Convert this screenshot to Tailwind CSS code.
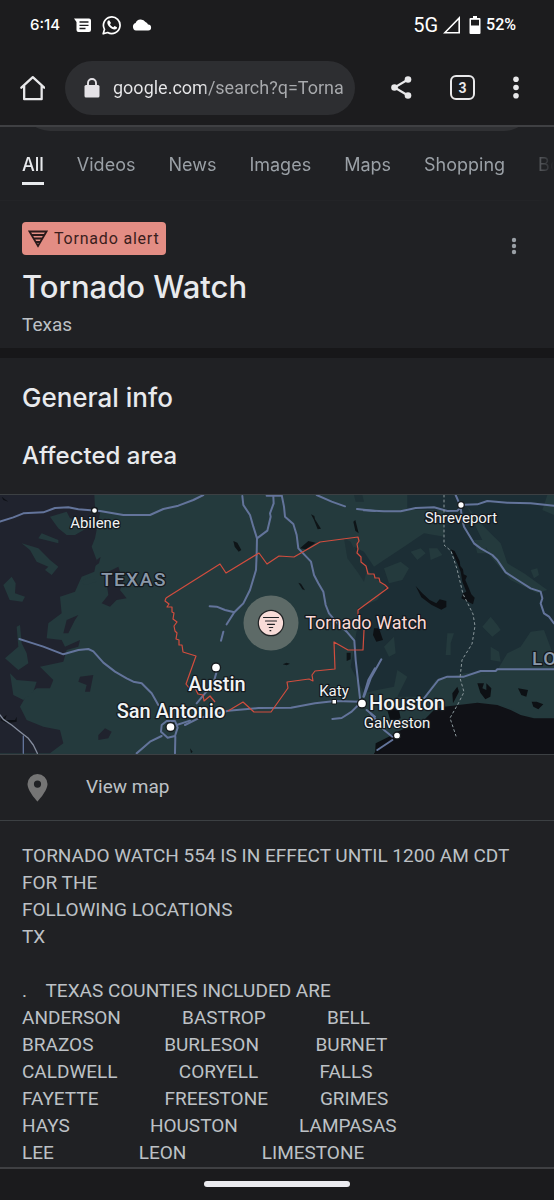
<!DOCTYPE html>
<html lang="en">
<head>
<meta charset="utf-8">
<meta name="viewport" content="width=device-width, initial-scale=1">
<title>Tornado Watch</title>
<script src="https://cdn.jsdelivr.net/npm/@tailwindcss/browser@4"></script>
</head>
<body class="min-h-screen flex flex-col bg-[#202124] text-[#bdc1c6] font-['Roboto',sans-serif] overflow-x-hidden">

<header class="bg-[#1c1c1e] border-b-2 border-[#3f4043]">
  <!-- Status bar -->
  <div class="flex items-center justify-between h-[50px] pl-[30px] pr-[38px] text-white font-medium">
    <div class="flex items-center">
      <span class="w-[44px] font-['Inter',sans-serif] text-[15px]">6:14</span>
      <svg class="w-[17px] h-[15px]" viewBox="0 0 17 15" fill="#fff"><path d="M0 .5h15a2 2 0 0 1 2 2V12a2 2 0 0 1-2 2H4.500a2 2 0 0 1-2-2V4z"/><path d="M5.500 4h9M5.500 7.300h9M5.500 10.500h6" stroke="#1c1c1e" stroke-width="1.300"/></svg>
      <svg class="ml-[11px] w-5 h-5" viewBox="0 0 20 20"><path d="M1.200 18.800l1.300-4.500a8.300 8.300 0 1 1 3.200 3.200z" fill="none" stroke="#fff" stroke-width="1.700" stroke-linejoin="round"/><path d="M7.200 5.200c-.5-.3-1.800.6-1.900 2-.2 3 4 7.300 7.200 7.300 1.500 0 2.600-1 2.500-2.300l-2.400-1.300-1.300 1.300c-1.500-.5-2.700-1.800-3.300-3l1-1.300z" fill="#fff"/></svg>
      <svg class="ml-[10px] w-[20px] h-[12px]" viewBox="0 0 20 12" fill="#fff"><path d="M4 11.500A3.900 3.900 0 0 1 3.600 4 5.600 5.600 0 0 1 13.500 3 4 4 0 0 1 16 5.500a3 3 0 0 1 .2 6z"/></svg>
    </div>
    <div class="flex items-center">
      <span class="text-[20px] font-normal">5G</span>
      <svg class="ml-[5px] w-[18px] h-[18px]" viewBox="0 0 18 18"><path d="M16.200 2v14.800H1.800z" fill="none" stroke="#fff" stroke-width="1.600"/></svg>
      <svg class="ml-[8px] w-[12px] h-[18px]" viewBox="0 0 12 18"><path d="M4 0h4v2h2.500a1 1 0 0 1 1 1v14a1 1 0 0 1-1 1h-9a1 1 0 0 1-1-1V3a1 1 0 0 1 1-1H4z" fill="#fff"/><path d="M2 3.800h8v5.700H2z" fill="#1c1c1e"/></svg>
      <span class="ml-[5px] text-[16px]">52%</span>
    </div>
  </div>
  <!-- Browser toolbar -->
  <div class="flex items-center h-[75px] pl-[20px] pr-[35px]">
    <button aria-label="Home" class="shrink-0 w-[25px] h-[26px]"><svg viewBox="0 0 24 25" fill="none" stroke="#e8e8ea" stroke-width="2.200" stroke-linejoin="round" stroke-linecap="round"><path d="M1.300 12.200L12.300 2l11 10.200M4 10.500v12.700h16.800V10.500"/></svg></button>
    <div class="ml-5 min-w-0 flex-1 flex items-center h-[54px] rounded-full bg-[#2d2e31] pl-[19px] pr-[11px]">
      <svg class="w-4 h-5 shrink-0" viewBox="0 0 16 20"><rect x=".5" y="7" width="15" height="12.500" rx="1.500" fill="#e4e2e6"/><path d="M4 8V5a4 4 0 0 1 8 0v3" fill="none" stroke="#e4e2e6" stroke-width="1.900"/></svg>
      <input aria-label="Address" type="text" value="google.com/search?q=Tornado" class="ml-[13px] min-w-0 flex-1 outline-none text-lg leading-[26px] text-transparent bg-clip-text bg-[linear-gradient(to_right,#e8e8ea_92px,#a9abae_93px)]">
    </div>
    <button aria-label="Share" class="shrink-0 ml-[36px] w-[21px] h-[23px]"><svg viewBox="0 0 21 23" fill="#e8e8ea"><path d="M17 3.500L3.500 11.500 17 19.500" fill="none" stroke="#e8e8ea" stroke-width="2.100"/><circle cx="17" cy="3.500" r="3.300"/><circle cx="3.500" cy="11.500" r="3.300"/><circle cx="17" cy="19.500" r="3.300"/></svg></button>
    <button aria-label="Tabs" class="shrink-0 ml-[38px] w-[25px] h-[25px] rounded-[6px] border-2 border-[#e8e8ea] text-[#e8e8ea] text-sm leading-none font-bold">3</button>
    <button aria-label="Browser menu" class="shrink-0 ml-[38px] w-[6px] h-[23px]"><svg viewBox="0 0 6 23" fill="#e8e8ea"><circle cx="3" cy="3.300" r="2.800"/><circle cx="3" cy="11.500" r="2.800"/><circle cx="3" cy="19.700" r="2.800"/></svg></button>
  </div>
</header>

<main class="flex-1">
  <!-- Lower edge of the search box, scrolled under the toolbar -->
  <div class="flex items-end h-1 px-[22px] overflow-hidden"><div class="w-full h-14 shrink-0 rounded-full bg-[#303134]"></div></div>
  <nav class="flex gap-[33px] h-[70px] pl-[22px] pt-[21px] overflow-hidden whitespace-nowrap font-['Inter',sans-serif] text-lg leading-[26px] text-[#9aa0a6] border-b border-[#232427] mask-r-from-[97%]">
    <a href="#" class="h-[33px] border-b-3 border-[#e8eaed] text-[#e8eaed] font-medium">All</a>
    <a href="#">Videos</a>
    <a href="#">News</a>
    <a href="#">Images</a>
    <a href="#">Maps</a>
    <a href="#">Shopping</a>
    <a href="#" class="opacity-50">Books</a>
  </nav>

  <section class="flex justify-between h-[147px] pl-[22px] pr-[37px] pt-[21px]">
    <div>
      <div class="flex items-center w-fit h-[33px] rounded-[4px] bg-[#e38d84] text-[#3a1d1c] px-[6px] gap-[6px] text-base tracking-wider">
        <svg class="w-5 h-[18px]" viewBox="0 0 20 18" fill="none" stroke="#2b1a1b" stroke-width="1.800"><path d="M1.500 1.500h17L10 16zM3.500 5h13M5.500 8.500h9M7.500 12h5"/></svg>
        <span>Tornado alert</span>
      </div>
      <h1 class="mt-3 font-['Inter',sans-serif] font-medium text-[31px] leading-10 text-[#e8eaed]">Tornado Watch</h1>
      <p class="mt-[6px] text-[19px] leading-6">Texas</p>
    </div>
    <button aria-label="More options" class="mt-[15px] w-[6px] h-[18px]"><svg viewBox="0 0 6 18" fill="#9aa0a6"><circle cx="3" cy="3" r="2.200"/><circle cx="3" cy="9" r="2.200"/><circle cx="3" cy="15" r="2.200"/></svg></button>
  </section>

  <div class="h-[10px] bg-[#171719]"></div>

  <section>
    <div class="px-[22px] pt-[24px] pb-[22px] font-['Inter',sans-serif] font-medium text-[#e8eaed]">
      <h2 class="text-[26px] leading-8">General info</h2>
      <h3 class="mt-[26px] text-[24px] leading-8">Affected area</h3>
    </div>

    <svg class="block w-full border-y border-[#3c4043]" viewBox="0 0 554 259" role="img" aria-label="Map of the affected area">
      <rect width="554" height="259" fill="#243a3d"/>
      <!-- West: dry land -->
      <g transform="translate(0 -15) scale(.33333)" fill="#20232e">
        <path d="M0 45H283L285 80 300 100 285 175 275 200 290 240 283 275 245 290 225 335 180 350 185 400 145 430 140 475 185 480 195 500 240 480 235 500 200 510 190 545 120 560 160 600 150 625 110 625 80 645 60 680 80 720 130 740 180 750 190 790 150 820H0z"/>
        <path d="M290 240l12-10-5 20-15 10zM325 275l30-15 15 45-10 25 20 25-30 5-20 20-25-10 20-25-5-35zM200 420l35-15-10 15-20 40h-15zM240 590l40-5-10 50-15 0 5-20-25-10zM295 765l20-20 20 10-10 20-30 5z"/>
        <g fill="#243a3d"><path d="M150 110l50-15 10 20 40 10 10 20-35 20-25 0-25-20zM115 175l10-15 50 20v10zM65 190l50 15 35 35 25 20-20 25-20-15 10-10-35-15-20-35zM10 315l25-25 12 20-2 30 30 10-8 15-38-5zM50 440l10-5 5 55 15 30 5 30-30 20-40-35 40-35zM30 580l20 20 60 5-10 30-30 25-30-15zM240 305l30-15 20 15-35 10z"/></g>
        <path d="M0 720l20-15-5 15 30 0 5-10v15l-30 5zM5 50l20 15-15-5z" fill="#0e1116"/>
      </g>
      <!-- East: forest and gulf -->
      <g transform="translate(364 -15) scale(.33333)">
        <path d="M130 45H570V530L540 450 500 455 470 500 430 520 400 570 300 580 215 600 180 650 100 650 130 590 100 570 90 620 40 630 0 640-40 560-30 500-20 440-20 385 40 360 65 320 30 290-10 250-30 200 0 215 30 260 60 240 120 200 150 180 180 160 240 170 240 90 130 90z" fill="#1c2e35"/>
        <path d="M60 265l50-20 25 20-20 35-40 10zM310 80l50 60 50 50 20 60 50 30 70 50-30 10-80-40-60-70-40-80zM330 180l30 0 10 40-30 0zM250 460l20 0-10 30 0 35-15 0zM355 440l25-30 20 25 10 15-25 20zM60 500l30-30 5 50-20 10zM195 205l25 0 15 20-35 15zM140 215l30-10 15 15-25 20zM550 45h20v60l-35-15zM380 500l25 15 5 30-30-5zM500 270l20-5 5 20-15 10z" fill="#243a3d"/>
        <path d="M-30 45l25 0 5 20-25 0zM-60 175l20 10 30 60 20 20-10 40-20-30-30-40z" fill="#1e3136"/>
        <path d="M180 660l45-60h80l100-25h165v150l-60-10-60-25-40-15-110 0-40 10-50 10z" fill="#243a3d"/>
        <path d="M30 820L90 760 180 720 210 690 240 680 340 668 400 675 440 690 470 705 510 715 570 715V825H30z" fill="#101116"/>
        <path d="M70 690l30-25 10 50-30 10zM340 610l20 0-5 15 12 5 0-20 15 15-3 25-15 8-15-20zM462 625l30 5-5 20-15-5zM503 665l15 0 20 8-15 15-15-8zM155 318l20 22 22 20 20 10 10-12 20 5v18l-15 8-30-15-30-22zM30 445l15 0 12 35-20 5-10-20zM260 208l12 5 15 30 2 15 8 10 2 15 10 5-5 12 8 18 10 25 10 10-5 20-15-8-20-10 5-15 10-5-12-30-5-30-10-25zM265 640l15-20 5 15-18 35zM35 790l50-25-40 55-12 0z" fill="#0d1014"/>
      </g>
      <g transform="translate(185 -15) scale(.33333)" fill="#0e1417">
        <path d="M145 183l12 5 12 22-8 5-12-15zM378 103l10 5 2 10 18 28-10 2-12-30zM345 205l25-22 22 5-30 20zM505 125l6-5 10 40-10-8zM340 308l8 3 12 20-8-3zM293 553l12-5 10 3-10 5zM485 518l12 0 0 20-12 5zM15 805l8 10-5 5z"/>
      </g>
      <!-- Roads -->
      <g fill="none" stroke="#63749b" stroke-linejoin="round" stroke-linecap="round">
        <g transform="translate(0 -15) scale(.33333)" stroke-width="6">
          <path d="M0 125L40 112 70 100 130 97 165 84 205 82 235 88 300 93 370 105H450L490 87 535 77 580 60 610 45M58 477L90 487 130 500 190 523 235 510 265 507 280 514 310 548 345 575 380 595 400 605 425 610 455 640 475 675M410 820L450 785 485 768M525 820L526 770M530 735L570 722M485 735l15-12h25l8 20-8 25-22 5-20-18z"/>
          <path d="M70 820V768" stroke-width="4"/>
          <path d="M0 705L10 718 35 735 60 755 85 775 100 795 112 820" stroke="#858d9e" stroke-width="4"/>
        </g>
        <g transform="translate(185 -15) scale(.33333)" stroke-width="6">
          <path d="M172 48L175 75 195 105 205 140 216 175 215 222 213 270 195 330 175 370 160 385 148 397 120 390 95 380 74 379M148 397L125 433M115 455L108 482M216 175L247 152 257 110 255 100 266 70 265 50M245 47H290M290 45L297 80 300 110 325 132 335 165 340 205 378 245 387 285 400 310 415 335 422 375 432 400 445 415 460 432 485 455 508 482 512 540 525 655M395 45L440 65 480 79M516 87L570 93M95 575L85 610 35 670M0 735L40 715 130 692 220 684 318 683 390 670 450 663 525 665M442 717L470 714 500 695 520 675M535 650L550 600 570 565M545 690L570 710"/>
        </g>
        <g transform="translate(364 -15) scale(.33333)" stroke-width="6">
          <path d="M0 91L60 94H110L155 84 210 82 250 93 280 92 300 74 340 73 370 63 430 68 500 70 570 77M275 45L290 80 293 110 300 140 330 190 350 205 385 225 400 240 425 277 470 306 500 325 530 335 535 355 530 370 540 400 555 410 570 430M0 650L20 595 52 538M180 655L223 600 250 590 300 590 350 573 395 573 400 568 570 568M20 700L60 750 85 770M40 810L85 780"/>
        </g>
        <path d="M444 0v50l7 6 6 18 6 25 6 12 4 8 2 12-3 18-10 16-2 18 4 14-6 12-8 14 6 18" stroke="#8b989c" stroke-width="1" stroke-dasharray="2 3"/>
      </g>
      <!-- Watch boundary -->
      <path d="M166 103L220 69 226 78 259 58 267 69 279 61 294 62 320 47 358 42l1 4-2 3 1 5-1 4 4 4 0 5 5 4 2 8 6 0 1 4 4 0 1 4 5 3 3 3L358 115V121M364 135L363 155H348L334 147 335 174 315 176l-3 4 1 6-4-2-22 3 1 6L271 217H254L243 207 228 216M166 103l-1 3 4 3-2 3 5 0 0 5 2 1-1 6 4 3-3 4 1 5 2 2-1 6 3 1 0 5 3 0 1 7 13 4-10 28 4 5 5-1 3 6 5 1 1 6 6-5 5 6" fill="none" stroke="#d24d3e" stroke-width="1.200" stroke-linejoin="round"/>
      <!-- Marker -->
      <circle cx="271" cy="128" r="27.500" fill="#a3a69c" fill-opacity=".45"/>
      <circle cx="271" cy="128" r="12.700" fill="#f8dcd8" stroke="#1f2224" stroke-width="1.200"/>
      <path d="M263.500 122.500h15M265.500 126h11M267.500 129.300h7M269.300 132.500h3.400M270 135.700h.8" stroke="#202124" stroke-width="1.200" stroke-linecap="round"/>
      <!-- Places -->
      <g fill="#fff" stroke="#15191d" stroke-width="1.300">
        <circle cx="94.500" cy="15.500" r="3"/><circle cx="461" cy="10" r="3.300"/><circle cx="216" cy="172.500" r="4.500"/><circle cx="170.500" cy="232" r="4.500"/><circle cx="362" cy="208.500" r="4.500"/><circle cx="397" cy="240.500" r="3.500"/><path d="M332 204.500h4.500v4.500H332z" stroke-width="1"/>
      </g>
      <g fill="#f1f3f4" stroke="#14191e" stroke-width="2.500" stroke-linejoin="round" paint-order="stroke" font-family="Roboto, sans-serif" font-size="15" text-anchor="middle">
        <text x="95" y="33">Abilene</text>
        <text x="461" y="28">Shreveport</text>
        <text x="334" y="201">Katy</text>
        <text x="397" y="233">Galveston</text>
        <text x="366" y="134" font-size="18" fill="#fbdad6">Tornado Watch</text>
        <g font-size="20" font-weight="500"><text x="217" y="196">Austin</text><text x="171" y="223">San Antonio</text><text x="407" y="215">Houston</text></g>
        <g font-size="19" font-weight="500" fill="#8a98a9" letter-spacing="1.500" text-anchor="start"><text x="101" y="91">TEXAS</text><text x="532" y="170">LOUISIANA</text></g>
      </g>
    </svg>

    <a href="#" class="flex items-center h-[66px] pl-[27px] border-b border-[#3c4043] text-[19px]">
      <svg class="w-[21px] h-7" viewBox="0 0 21 28"><path fill-rule="evenodd" d="M10.500 0A10 10 0 0 0 .5 10c0 7 10 17.500 10 17.500S20.500 17 20.500 10a10 10 0 0 0-10-10zm0 6.500a3.600 3.600 0 1 1 0 7.200 3.600 3.600 0 0 1 0-7.200z" fill="#757575"/></svg>
      <span class="ml-[38px]">View map</span>
    </a>

    <p class="px-[22px] pt-[21px] text-[19px] leading-[27px] whitespace-pre-wrap">TORNADO WATCH 554 IS IN EFFECT UNTIL 1200 AM CDT FOR THE
FOLLOWING LOCATIONS
TX

.    TEXAS COUNTIES INCLUDED ARE
ANDERSON             BASTROP             BELL
BRAZOS               BURLESON            BURNET
CALDWELL             CORYELL             FALLS
FAYETTE              FREESTONE           GRIMES
HAYS                 HOUSTON             LAMPASAS
LEE                  LEON                LIMESTONE</p>
  </section>
</main>

<footer class="flex justify-center pt-3 h-[33px] bg-[#1b1b1d] border-t-2 border-[#3f4043]">
  <div class="w-[146px] h-[6px] rounded-full bg-[#ececf0]"></div>
</footer>
</body>
</html>
